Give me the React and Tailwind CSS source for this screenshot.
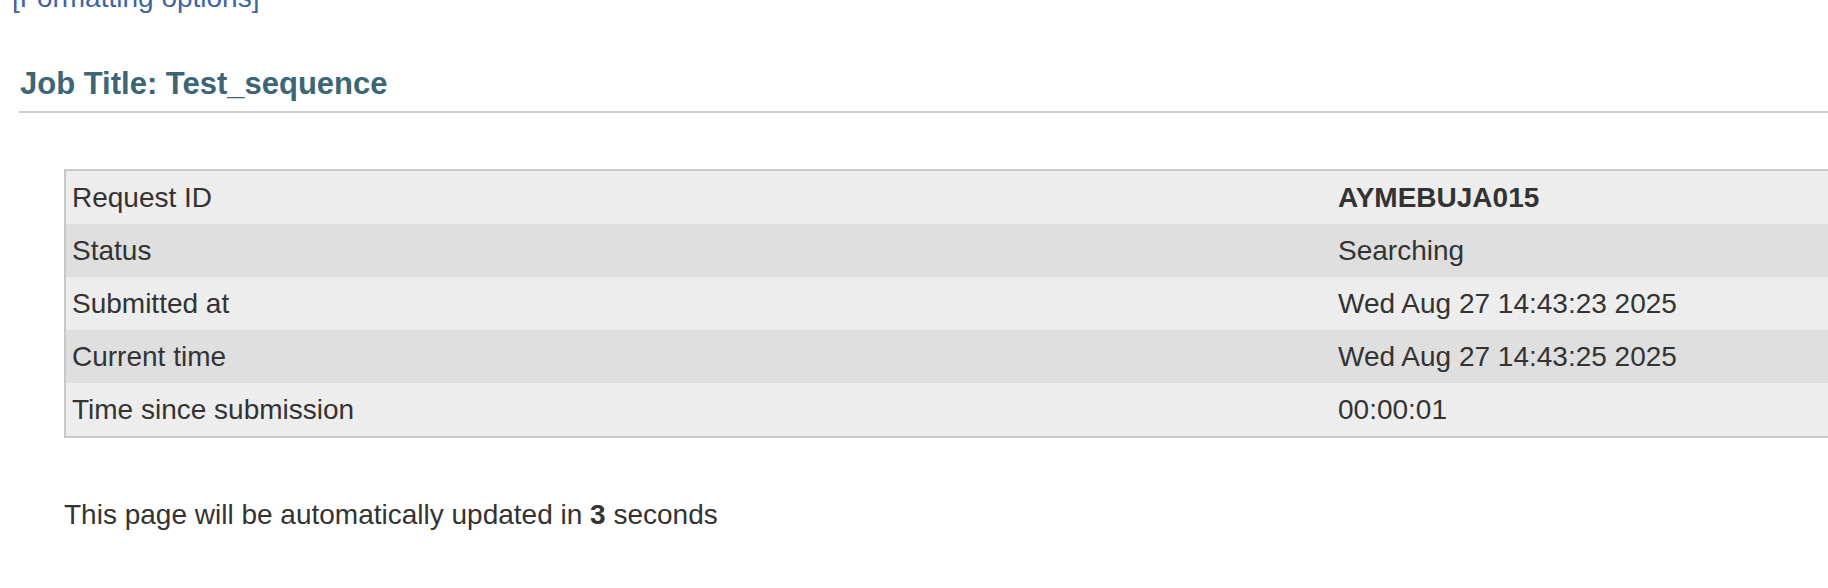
export default function App() {
  const rows = [
    ["Request ID", "AYMEBUJA015", true],
    ["Status", "Searching", false],
    ["Submitted at", "Wed Aug 27 14:43:23 2025", false],
    ["Current time", "Wed Aug 27 14:43:25 2025", false],
    ["Time since submission", "00:00:01", false],
  ];
  return (
    <div
      className="relative w-[1828px] h-[588px] overflow-hidden bg-white text-[#333333]"
      style={{ fontFamily: '"Liberation Sans", Arial, Helvetica, sans-serif' }}
    >
      <div className="pl-[12px] -mt-[18px] text-[28px] leading-[32px] text-[#3f64a3]">
        [Formatting options]
      </div>
      <div className="ml-[19px] mt-[52px]">
        <h2 className="pl-px text-[31px] leading-[36px] font-bold text-[#3c6676]">
          Job Title: Test_sequence
        </h2>
        <div className="mt-[9px] h-[2px] bg-[#cccccc]" />
      </div>
      <div className="ml-[64px] mt-[56px] w-[1860px] border-2 border-[#c9c9c9]">
        {rows.map(([k, v, bold], i) => (
          <div
            key={k}
            className={
              "flex h-[53px] items-center text-[28px] leading-[32px] " +
              (i % 2 === 0 ? "bg-[#ededed]" : "bg-[#dfdfdf]")
            }
          >
            <div className="w-[1264px] pl-[6px]">{k}</div>
            <div className={"pl-[8px] " + (bold ? "font-bold" : "")}>{v}</div>
          </div>
        ))}
      </div>
      <p className="ml-[64px] mt-[61px] text-[28px] leading-[32px]">
        This page will be automatically updated in <b>3</b> seconds
      </p>
    </div>
  );
}
